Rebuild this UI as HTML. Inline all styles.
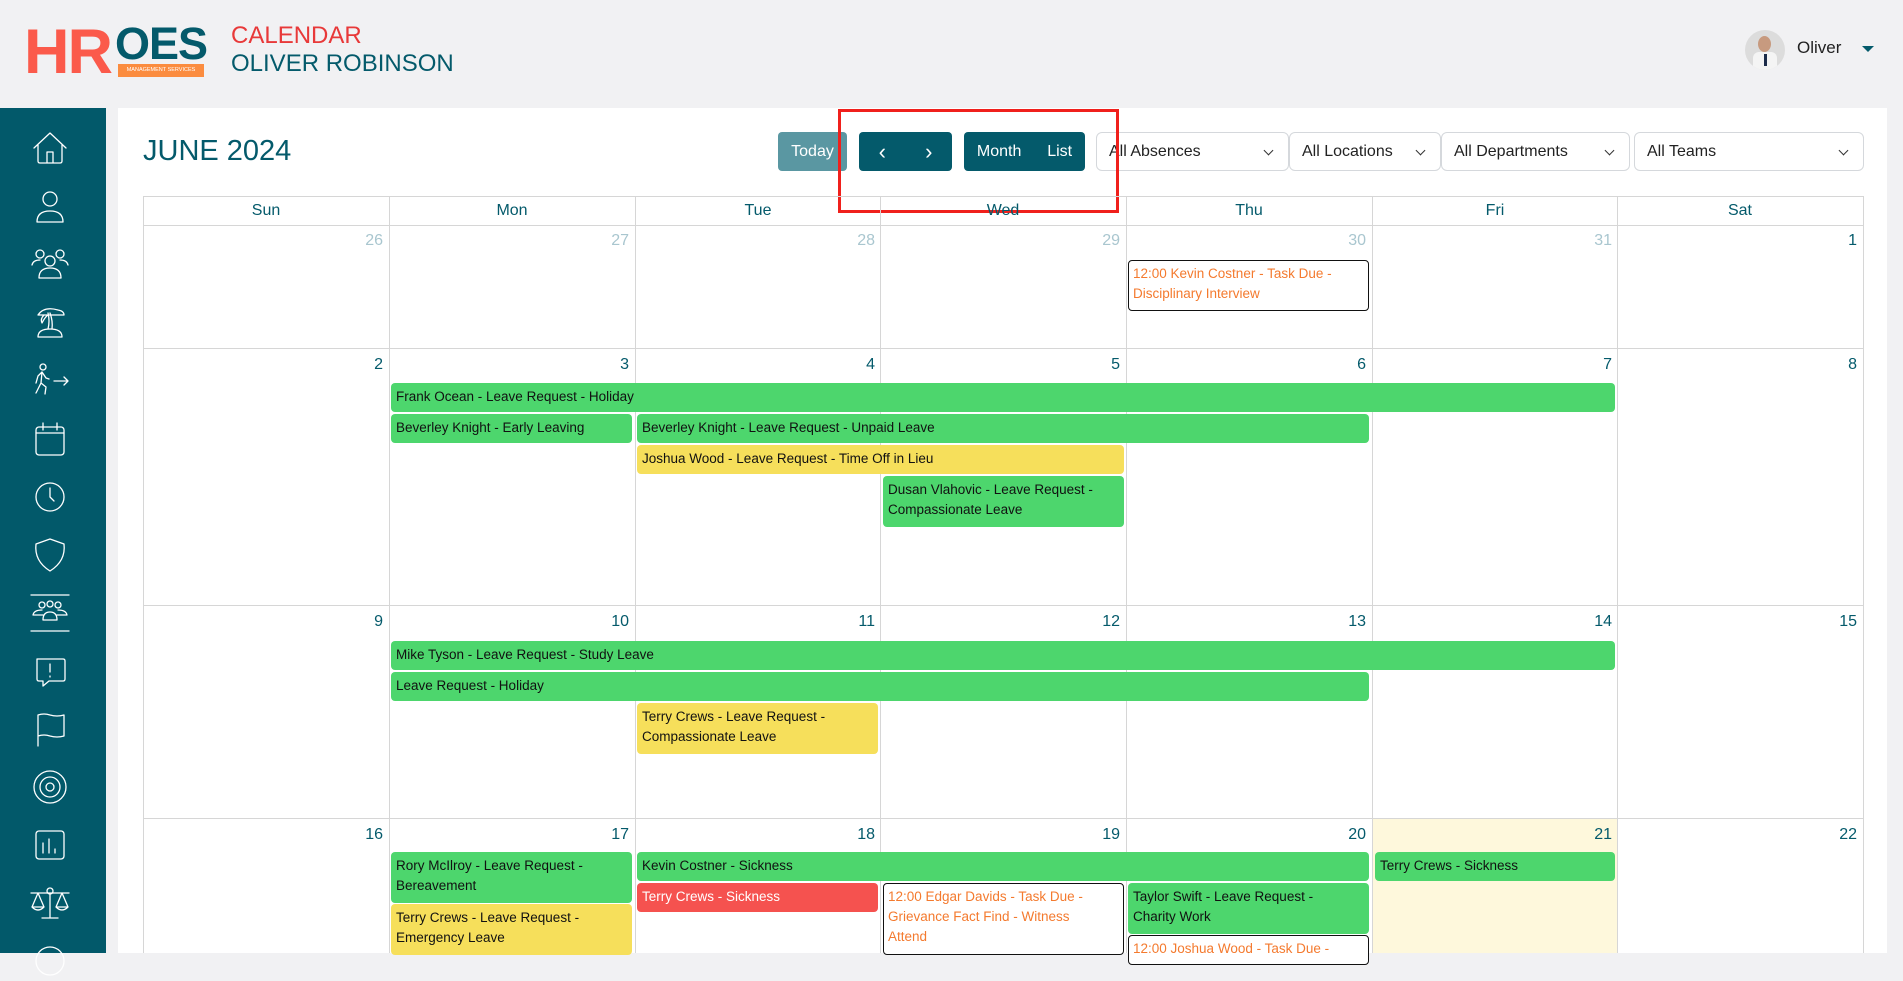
<!DOCTYPE html>
<html><head><meta charset="utf-8"><style>
*{box-sizing:border-box;margin:0;padding:0}
body{width:1903px;height:953px;overflow:hidden;background:#f1f1f3;font-family:"Liberation Sans",Arial,sans-serif;position:relative}
.abs{position:absolute}
.side{left:0;top:108px;width:106px;height:845px;background:#02596a}
.side svg{position:absolute;left:30px;width:40px;height:40px;fill:none;stroke:#fff;stroke-width:1.3;stroke-linecap:round;stroke-linejoin:round}
.main{left:118px;top:108px;width:1769px;height:845px;background:#fff}
.btn{border-radius:4px;color:#fff;font-size:16px;display:flex;align-items:center;top:132px;height:39px}
.sel{top:132px;height:39px;border:1px solid #d5d8dc;border-radius:6px;font-size:16px;color:#222;display:flex;align-items:center;padding-left:12px;background:#fff}
.sel:after{content:"";position:absolute;right:16px;top:14px;width:6px;height:6px;border-right:1.5px solid #333;border-bottom:1.5px solid #333;transform:rotate(45deg)}
.vl{width:1px;background:#d6d6d6}
.hl{height:1px;background:#d6d6d6;left:143px;width:1721px}
.dh{top:196px;height:30px;width:246px;text-align:center;line-height:30px;color:#045a6b;font-size:16px}
.dn{font-size:16px;color:#045a6b;text-align:right;width:230px}
.dn.o{color:#a9c6cf}
.ev{font-size:13.5px;line-height:20px;color:#111;padding:4px 5px;border-radius:4px;height:29px;white-space:nowrap;overflow:hidden}
.g{background:#4dd66d}.y{background:#f6df5b}.r{background:#f5524f;color:#fff}
.w{background:#fff;border:1px solid #111;color:#f47a2e;padding:3px 4px}
.two{height:51px}
</style></head><body>
<!-- header -->
<div class="abs" style="left:24px;top:24px;font-size:63px;font-weight:bold;color:#fb5a4b;letter-spacing:-2px;line-height:56px;height:56px">HR</div>
<div class="abs" style="left:115px;top:22px;font-size:45px;font-weight:bold;color:#045a6b;line-height:44px;letter-spacing:-1px">OES</div>
<div class="abs" style="left:118px;top:64px;width:86px;height:13px;background:#fb8c3f;color:#fff;font-size:5.5px;line-height:13px;text-align:center">MANAGEMENT SERVICES</div>
<div class="abs" style="left:231px;top:22px;font-size:24px;color:#e83939;line-height:28px">CALENDAR</div>
<div class="abs" style="left:231px;top:50px;font-size:24px;color:#045a6b;line-height:28px">OLIVER ROBINSON</div>
<div class="abs" style="left:1745px;top:30px;width:40px;height:40px;border-radius:50%;background:#dcdcdc;overflow:hidden"><div style="position:absolute;left:13px;top:6px;width:13px;height:16px;border-radius:50%;background:#c79a7f"></div><div style="position:absolute;left:8px;top:22px;width:24px;height:20px;background:#f4f4f4;border-radius:6px 6px 0 0"></div><div style="position:absolute;left:19px;top:24px;width:3px;height:12px;background:#1c2c4a"></div></div>
<div class="abs" style="left:1797px;top:38px;font-size:17px;color:#222">Oliver</div>
<div class="abs" style="left:1862px;top:46px;border-left:6px solid transparent;border-right:6px solid transparent;border-top:6px solid #045a6b"></div>
<!-- sidebar -->
<div class="abs side">
<svg viewBox="0 0 40 40" style="top:20px"><path d="M4 20 L20 5 L36 20 M8 17 V33 Q8 35 10 35 H30 Q32 35 32 33 V17 M17 35 V24 H23 V35"/></svg>
<svg viewBox="0 0 40 40" style="top:79px"><circle cx="20" cy="12" r="7"/><path d="M7 35 Q7 24 20 24 Q33 24 33 35 Z"/></svg>
<svg viewBox="0 0 40 40" style="top:137px"><circle cx="10" cy="9" r="4"/><circle cx="30" cy="9" r="4"/><circle cx="20" cy="16" r="5"/><path d="M2 20 Q3 15 10 15 M38 20 Q37 15 30 15 M9 33 Q9 23 20 23 Q31 23 31 33 Z"/></svg>
<svg viewBox="0 0 40 40" style="top:195px"><path d="M8 34 Q8 26 20 26 Q32 26 32 34 Z M18 26 Q20 18 18 10 M22 26 Q23 18 20 10 M8 12 Q14 3 28 7 Q34 8 34 12 Z M14 12 Q10 16 12 20 Q15 14 18 12"/></svg>
<svg viewBox="0 0 40 40" style="top:253px"><circle cx="13" cy="6" r="3"/><path d="M12 11 L8 15 L6 22 M12 11 L16 17 L19 18 M12 11 L11 22 L6 32 M11 22 L16 26 L15 33 M24 20 H38 M34 16 L38 20 L34 24" /></svg>
<svg viewBox="0 0 40 40" style="top:311px"><rect x="6" y="8" width="28" height="28" rx="3"/><path d="M6 14 H34 M13 4 V11 M27 4 V11"/></svg>
<svg viewBox="0 0 40 40" style="top:369px"><circle cx="20" cy="20" r="14"/><path d="M20 11 V20 L24 24"/></svg>
<svg viewBox="0 0 40 40" style="top:427px"><path d="M20 4 L34 9 Q36 26 20 36 Q4 26 6 9 Z"/></svg>
<svg viewBox="0 0 40 40" style="top:485px"><path d="M1 2 H39 M1 38 H39"/><circle cx="12" cy="12" r="3"/><circle cx="20" cy="11" r="3"/><circle cx="28" cy="12" r="3"/><path d="M3 22 Q4 17 12 17 M37 22 Q36 17 28 17 M13 27 Q13 19 20 19 Q27 19 27 27 Z M3 22 H13 M37 22 H27"/></svg>
<svg viewBox="0 0 40 40" style="top:543px"><path d="M7 8 H33 Q35 8 35 10 V28 Q35 30 33 30 H19 L13 35 V30 H9 Q7 30 7 28 Z M20 13 V21 M20 25 V26"/></svg>
<svg viewBox="0 0 40 40" style="top:601px"><path d="M8 37 V6 Q14 4 20 6 Q27 8 34 6 V27 Q27 29 20 27 Q14 25 8 27"/></svg>
<svg viewBox="0 0 40 40" style="top:659px"><circle cx="20" cy="20" r="16"/><circle cx="20" cy="20" r="10"/><circle cx="20" cy="20" r="4"/></svg>
<svg viewBox="0 0 40 40" style="top:717px"><rect x="6" y="6" width="28" height="28" rx="3"/><path d="M13 18 V28 M19 14 V28 M25 24 V28"/></svg>
<svg viewBox="0 0 40 40" style="top:775px"><circle cx="20" cy="8" r="3"/><path d="M20 11 V34 M12 35 H28 M1 10 H39 M8 10 L2 24 Q8 30 14 24 Z M32 10 L26 24 Q32 30 38 24 Z M2 24 H14 M26 24 H38"/></svg>
<svg viewBox="0 0 40 40" style="top:833px"><circle cx="20" cy="20" r="14"/></svg>
</div>
<!-- main -->
<div class="abs main"></div>
<div class="abs" style="left:143px;top:134px;font-size:29px;color:#045a6b;line-height:34px">JUNE 2024</div>
<div class="abs btn" style="left:778px;width:69px;background:#5a97a2;justify-content:center">Today</div>
<div class="abs btn" style="left:859px;width:93px;background:#045a6b;justify-content:space-around;font-size:22px"><span>‹</span><span>›</span></div>
<div class="abs btn" style="left:964px;width:121px;background:#045a6b;justify-content:space-around"><span>Month</span><span>List</span></div>
<div class="abs sel" style="left:1096px;width:193px">All Absences</div>
<div class="abs sel" style="left:1289px;width:152px">All Locations</div>
<div class="abs sel" style="left:1441px;width:189px">All Departments</div>
<div class="abs sel" style="left:1634px;width:230px">All Teams</div>
<div class="abs" style="left:838px;top:109px;width:281px;height:104px;border:3px solid #f0201c"></div>
<!-- grid -->
<div class="abs" style="left:1372px;top:818px;width:246px;height:135px;background:#fef8dc"></div>
<div class="abs hl" style="top:196px"></div><div class="abs hl" style="top:225px"></div><div class="abs hl" style="top:348px"></div><div class="abs hl" style="top:605px"></div><div class="abs hl" style="top:818px"></div>
<div class="abs vl" style="left:143px;top:196px;height:757px"></div><div class="abs vl" style="left:389px;top:196px;height:757px"></div><div class="abs vl" style="left:635px;top:196px;height:757px"></div><div class="abs vl" style="left:880px;top:196px;height:757px"></div><div class="abs vl" style="left:1126px;top:196px;height:757px"></div><div class="abs vl" style="left:1372px;top:196px;height:757px"></div><div class="abs vl" style="left:1617px;top:196px;height:757px"></div><div class="abs vl" style="left:1863px;top:196px;height:757px"></div>
<div class="abs dh" style="left:143px">Sun</div><div class="abs dh" style="left:389px">Mon</div><div class="abs dh" style="left:635px">Tue</div><div class="abs dh" style="left:880px">Wed</div><div class="abs dh" style="left:1126px">Thu</div><div class="abs dh" style="left:1372px">Fri</div><div class="abs dh" style="left:1617px">Sat</div>
<div class="abs dn o" style="left:153px;top:232px">26</div><div class="abs dn o" style="left:399px;top:232px">27</div><div class="abs dn o" style="left:645px;top:232px">28</div><div class="abs dn o" style="left:890px;top:232px">29</div><div class="abs dn o" style="left:1136px;top:232px">30</div><div class="abs dn o" style="left:1382px;top:232px">31</div><div class="abs dn" style="left:1627px;top:232px">1</div>
<div class="abs dn" style="left:153px;top:356px">2</div><div class="abs dn" style="left:399px;top:356px">3</div><div class="abs dn" style="left:645px;top:356px">4</div><div class="abs dn" style="left:890px;top:356px">5</div><div class="abs dn" style="left:1136px;top:356px">6</div><div class="abs dn" style="left:1382px;top:356px">7</div><div class="abs dn" style="left:1627px;top:356px">8</div>
<div class="abs dn" style="left:153px;top:613px">9</div><div class="abs dn" style="left:399px;top:613px">10</div><div class="abs dn" style="left:645px;top:613px">11</div><div class="abs dn" style="left:890px;top:613px">12</div><div class="abs dn" style="left:1136px;top:613px">13</div><div class="abs dn" style="left:1382px;top:613px">14</div><div class="abs dn" style="left:1627px;top:613px">15</div>
<div class="abs dn" style="left:153px;top:826px">16</div><div class="abs dn" style="left:399px;top:826px">17</div><div class="abs dn" style="left:645px;top:826px">18</div><div class="abs dn" style="left:890px;top:826px">19</div><div class="abs dn" style="left:1136px;top:826px">20</div><div class="abs dn" style="left:1382px;top:826px">21</div><div class="abs dn" style="left:1627px;top:826px">22</div>
<!-- events -->
<div class="abs ev w two" style="left:1128px;top:260px;width:241px">12:00 Kevin Costner - Task Due -<br>Disciplinary Interview</div>
<div class="abs ev g" style="left:391px;top:383px;width:1224px">Frank Ocean - Leave Request - Holiday</div>
<div class="abs ev g" style="left:391px;top:414px;width:241px">Beverley Knight - Early Leaving</div>
<div class="abs ev g" style="left:637px;top:414px;width:732px">Beverley Knight - Leave Request - Unpaid Leave</div>
<div class="abs ev y" style="left:637px;top:445px;width:487px">Joshua Wood - Leave Request - Time Off in Lieu</div>
<div class="abs ev g two" style="left:883px;top:476px;width:241px">Dusan Vlahovic - Leave Request -<br>Compassionate Leave</div>
<div class="abs ev g" style="left:391px;top:641px;width:1224px">Mike Tyson - Leave Request - Study Leave</div>
<div class="abs ev g" style="left:391px;top:672px;width:978px">Leave Request - Holiday</div>
<div class="abs ev y two" style="left:637px;top:703px;width:241px">Terry Crews - Leave Request -<br>Compassionate Leave</div>
<div class="abs ev g two" style="left:391px;top:852px;width:241px">Rory McIlroy - Leave Request -<br>Bereavement</div>
<div class="abs ev y two" style="left:391px;top:904px;width:241px">Terry Crews - Leave Request -<br>Emergency Leave</div>
<div class="abs ev g" style="left:637px;top:852px;width:732px">Kevin Costner - Sickness</div>
<div class="abs ev r" style="left:637px;top:883px;width:241px">Terry Crews - Sickness</div>
<div class="abs ev w" style="left:883px;top:883px;width:241px;height:72px">12:00 Edgar Davids - Task Due -<br>Grievance Fact Find - Witness<br>Attend</div>
<div class="abs ev g two" style="left:1128px;top:883px;width:241px">Taylor Swift - Leave Request -<br>Charity Work</div>
<div class="abs ev w" style="left:1128px;top:935px;width:241px;height:30px">12:00 Joshua Wood - Task Due -</div>
<div class="abs ev g" style="left:1375px;top:852px;width:240px">Terry Crews - Sickness</div>
</body></html>
